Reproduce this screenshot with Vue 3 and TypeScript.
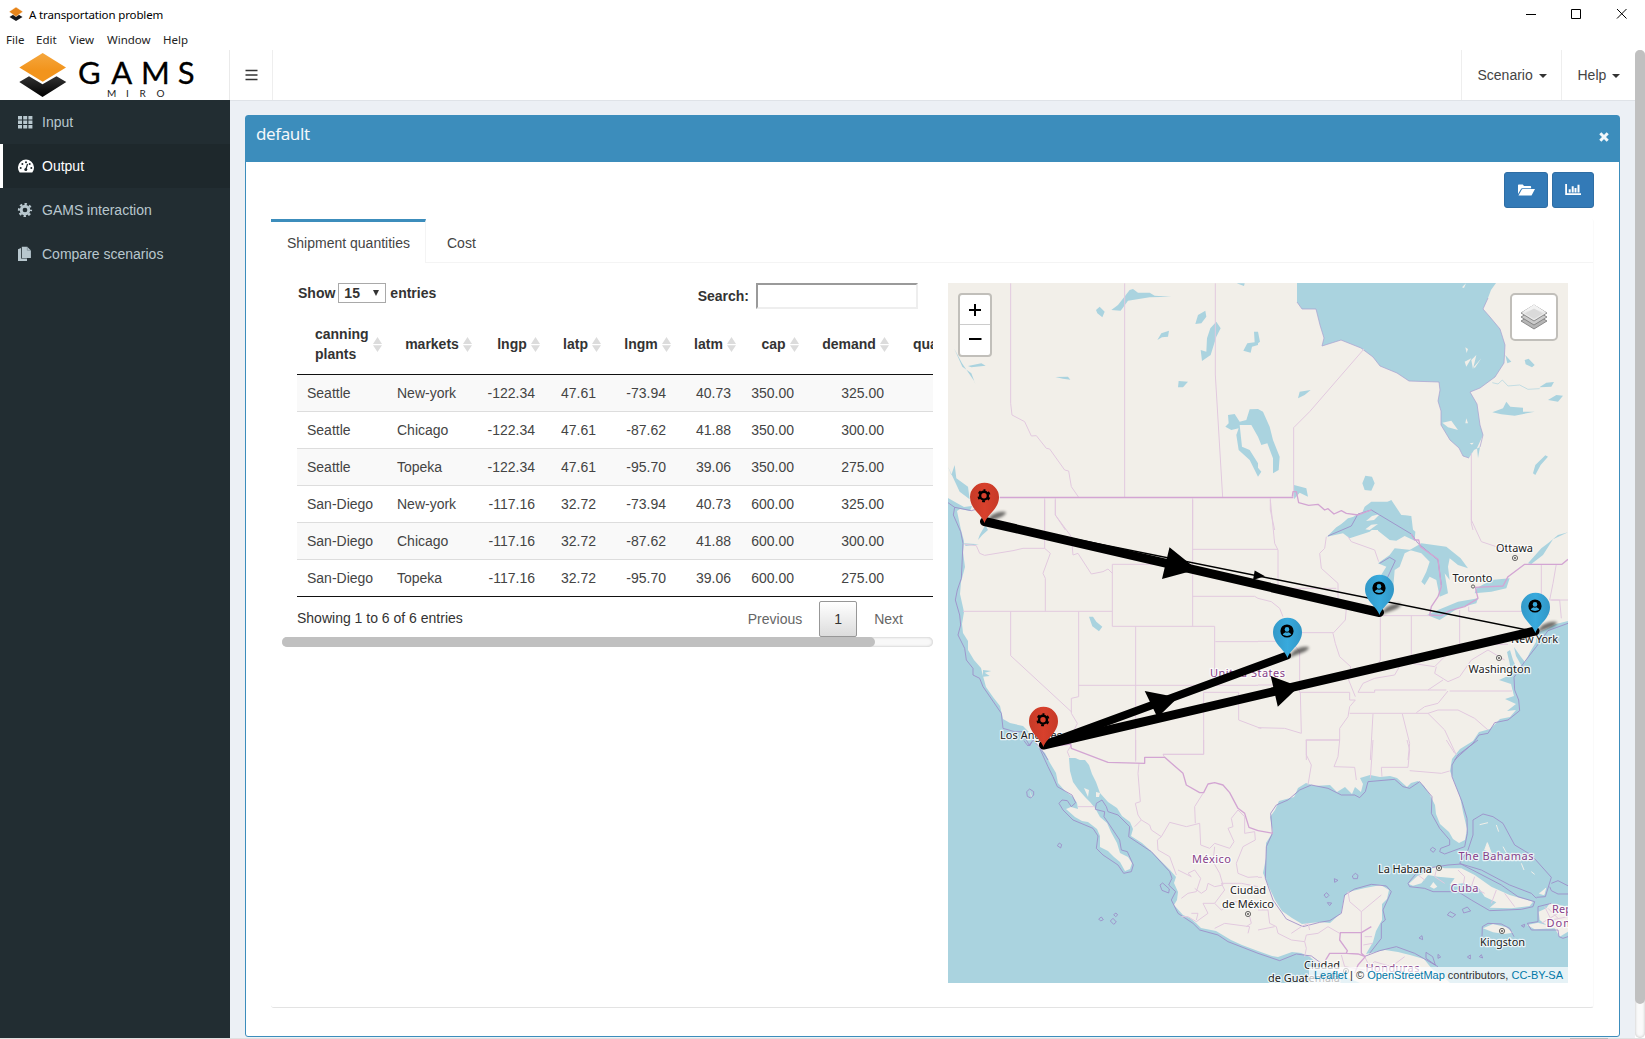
<script setup lang="ts">
interface Column { name: string; width: number }
interface Pin { x: number; y: number; kind: 'plant' | 'market' }
interface Label { text: string; x: number; y: number; w: number; country?: boolean }

const menus: string[] = ['File', 'Edit', 'View', 'Window', 'Help']

const columns: Column[] = [
  { name: 'canning plants', width: 90 },
  { name: 'markets', width: 90 },
  { name: 'lngp', width: 68 },
  { name: 'latp', width: 61 },
  { name: 'lngm', width: 70 },
  { name: 'latm', width: 65 },
  { name: 'cap', width: 63 },
  { name: 'demand', width: 90 },
  { name: 'quantities', width: 110 },
]

const rows: string[][] = [
  ['Seattle', 'New-york', '-122.34', '47.61', '-73.94', '40.73', '350.00', '325.00', ''],
  ['Seattle', 'Chicago', '-122.34', '47.61', '-87.62', '41.88', '350.00', '300.00', ''],
  ['Seattle', 'Topeka', '-122.34', '47.61', '-95.70', '39.06', '350.00', '275.00', ''],
  ['San-Diego', 'New-york', '-117.16', '32.72', '-73.94', '40.73', '600.00', '325.00', ''],
  ['San-Diego', 'Chicago', '-117.16', '32.72', '-87.62', '41.88', '600.00', '300.00', ''],
  ['San-Diego', 'Topeka', '-117.16', '32.72', '-95.70', '39.06', '600.00', '275.00', ''],
]

const pins: Pin[] = [
  { x: 984.5, y: 523, kind: 'plant' },
  { x: 1043.5, y: 747, kind: 'plant' },
  { x: 1379.5, y: 615, kind: 'market' },
  { x: 1287.5, y: 658, kind: 'market' },
  { x: 1535.5, y: 633, kind: 'market' },
]

const labels: Label[] = [
  { text: 'Ottawa', x: 1496, y: 551.5, w: 37 },
  { text: 'Toronto', x: 1452.5, y: 582, w: 40 },
  { text: 'New York', x: 1511, y: 642.5, w: 47 },
  { text: 'Washington', x: 1468.5, y: 672.5, w: 62 },
  { text: 'Los Angeles', x: 1000, y: 739, w: 62 },
  { text: 'United States', x: 1210, y: 676.5, w: 75, country: true },
  { text: 'México', x: 1192, y: 863, w: 39, country: true },
  { text: 'Ciudad', x: 1230, y: 894, w: 36 },
  { text: 'de México', x: 1222, y: 907.5, w: 52 },
  { text: 'La Habana', x: 1378, y: 872.5, w: 54 },
  { text: 'The Bahamas', x: 1458.5, y: 860, w: 75, country: true },
  { text: 'Cuba', x: 1450.5, y: 892, w: 28, country: true },
  { text: 'Rep.', x: 1552, y: 913, w: 23, country: true },
  { text: 'Domin.', x: 1546.5, y: 926.5, w: 43, country: true },
  { text: 'Kingston', x: 1480, y: 945.5, w: 45 },
  { text: 'Ciudad', x: 1304, y: 968.5, w: 36 },
  { text: 'de Guatemala', x: 1268, y: 981.5, w: 72 },
  { text: 'Honduras', x: 1365.5, y: 972, w: 54, country: true },
]

const towns: number[][] = [[1515, 558], [1499, 658], [1439, 868], [1502, 931], [1248, 914], [1346, 971]]
</script>

<template>
  <div class="app-window">
    <header class="titlebar">
      <svg class="app-icon" width="14" height="15" viewBox="0 0 14 15">
        <path d="M.5 10 7 6l6.500 4L7 14Z" fill="#17171a" />
        <path d="M0 4.700 7 0l7 4.700L7 9.700Z" fill="#e8851a" stroke="#fff" stroke-width=".5" />
      </svg>
      <span class="title">A transportation problem</span>
      <svg class="win-buttons" width="101" height="10" viewBox="0 0 101 10" fill="none" stroke="#000">
        <path d="M0 5.500h10M45.500.5h9v9h-9zM91 0l9.500 9.500M100.500 0 91 9.500" />
      </svg>
    </header>
    <nav class="menubar">
      <span v-for="m in menus" :key="m" :class="['menu', 'menu-' + m.toLowerCase()]">{{ m }}</span>
    </nav>

    <div class="body">
      <aside class="sidebar">
        <div class="logo">
          <svg width="229" height="50" viewBox="0 50 229 50">
            <defs>
              <linearGradient id="blackFace" x1="0" y1="0" x2="0" y2="1"><stop offset="0" stop-color="#333" /><stop offset="1" stop-color="#000" /></linearGradient>
              <linearGradient id="orangeFace" x1="0" y1="0" x2="0" y2="1"><stop offset="0" stop-color="#f5a73e" /><stop offset=".6" stop-color="#f2941c" /></linearGradient>
            </defs>
            <path d="M19.300 82 29 76.300l13.500 8 14-8L66.300 82 42.500 97Z" fill="url(#blackFace)" />
            <path d="M19.300 67.500 42.700 53l23.300 14.500L42.700 81.700Z" fill="url(#orangeFace)" />
            <text class="gams" y="84" x="78 111.300 141 177.800">GAMS</text>
            <text class="miro" y="97" x="107 126 139.500 156.500">MIRO</text>
          </svg>
        </div>
        <a class="item">
          <svg width="18" height="14" viewBox="0 0 18 14" fill="#b8c7ce"><path d="M1 1h4v3.500H1zM6.200 1h4v3.500h-4zM11.400 1h4v3.500h-4zM1 5.500h4V9H1zM6.200 5.500h4V9h-4zM11.400 5.500h4V9h-4zM1 10h4v3.500H1zM6.200 10h4v3.500h-4zM11.400 10h4v3.500h-4z" /></svg>
          <span>Input</span>
        </a>
        <a class="item active">
          <svg width="18" height="14" viewBox="0 0 18 14"><path d="M2.700 13.500A8 8 0 1 1 15.300 13.500Z" fill="#fff" /><g fill="#1e282c"><circle cx="3.700" cy="9" r="1" /><circle cx="5.400" cy="5" r="1" /><circle cx="9" cy="3.300" r="1" /><circle cx="14.300" cy="9" r="1" /><circle cx="12.700" cy="5" r="1" /><circle cx="8.800" cy="10.500" r="1.500" /></g><path d="m9 10 1.500-5" stroke="#1e282c" stroke-width="1.200" /></svg>
          <span>Output</span>
        </a>
        <a class="item">
          <svg width="18" height="14" viewBox="0 0 18 14"><g fill="none" stroke="#b8c7ce"><circle cx="8" cy="7" r="3.800" stroke-width="2.900" /><circle cx="8" cy="7" r="6" stroke-width="2.200" stroke-dasharray="2.400 2.312" stroke-dashoffset="1.200" /></g></svg>
          <span>GAMS interaction</span>
        </a>
        <a class="item">
          <svg width="18" height="16" viewBox="0 0 18 16"><path d="M1 3.200 4 2v10.500h6V15H1Z" fill="#b8c7ce" /><path d="M4.800.8h5.400L13.900 4.400V12H4.800Z" fill="#b8c7ce" /><path d="M10.300.8v3.500h3.600" fill="none" stroke="#6f8087" stroke-width=".6" /></svg>
          <span>Compare scenarios</span>
        </a>
      </aside>

      <main class="main">
        <div class="topnav">
          <div class="toggle"><svg width="13" height="12" viewBox="0 0 13 12"><path d="M.5 1.500h12M.5 6h12M.5 10.500h12" stroke="#333" stroke-width="1.700" /></svg></div>
          <div class="spacer"></div>
          <div class="drop scenario">Scenario <i class="caret"></i></div>
          <div class="drop help">Help <i class="caret"></i></div>
        </div>

        <section class="box">
          <div class="box-head">
            <span class="box-title">default</span>
            <svg width="10" height="10" viewBox="0 0 10 10"><path d="m1.300 1.300 7.400 7.400m0-7.400L1.300 8.700" stroke="#f2f7fa" stroke-width="3" /></svg>
          </div>
          <div class="tools">
            <button class="tool open"><svg width="17" height="12" viewBox="0 0 17 12" fill="#fff"><path d="M0 10V1.200Q0 .5.800.5h4l1.200 1.500h6.300q.8 0 .8.800v1.400H4Q3.400 4.200 3 4.900Z" /><path d="M.5 11.500 3.800 5.500Q4.100 5 4.700 5H17l-3.200 6Q13.500 11.500 13 11.500Z" /></svg></button>
            <button class="tool chart"><svg width="16" height="12" viewBox="0 0 16 12"><path d="M1.100 0v10.200H16" fill="none" stroke="#fff" stroke-width="1.800" /><path d="M4.700 8.500V5.300M7.700 8.500V2.200M10.500 8.500V4M13.500 8.500V.7" stroke="#fff" stroke-width="2" /></svg></button>
          </div>

          <div class="tabs">
            <div class="tab-head">
              <div class="tab on">Shipment quantities</div>
              <div class="tab">Cost</div>
              <div class="tab-fill"></div>
            </div>
            <div class="tab-body">
              <div class="table-col">
                <div class="controls">
                  <div class="length">Show <span class="select">15<i></i></span> entries</div>
                  <div class="search">Search: <span class="input"></span></div>
                </div>
                <table>
                  <colgroup><col v-for="c in columns" :key="c.name" :style="{ width: c.width + 'px' }"></colgroup>
                  <thead>
                    <tr>
                      <th v-for="c in columns" :key="c.name">
                        <div class="th"><span>{{ c.name }}</span><svg width="9" height="15" viewBox="0 0 9 15"><path d="M0 7 4.500 0 9 7ZM0 8.200h9L4.500 15Z" fill="#dcdcdc" /></svg></div>
                      </th>
                    </tr>
                  </thead>
                  <tbody>
                    <tr v-for="(r, i) in rows" :key="i"><td v-for="(c, j) in r" :key="j">{{ c }}</td></tr>
                  </tbody>
                </table>
                <div class="table-foot">
                  <span class="info">Showing 1 to 6 of 6 entries</span>
                  <div class="pager"><span class="prev">Previous</span><span class="page">1</span><span class="next">Next</span></div>
                </div>
                <div class="hscroll"><div></div></div>
              </div>

              <div class="map">
                <svg width="620" height="700" viewBox="948 283 620 700">
                  <defs>
                    <filter id="soft" x="-30%" y="-60%" width="160%" height="220%"><feGaussianBlur stdDeviation="1.500" /></filter>
                    <linearGradient id="red" x1="0" y1="0" x2="1" y2="0"><stop offset="0" stop-color="#c63a27" /><stop offset=".5" stop-color="#d8402c" /><stop offset="1" stop-color="#c63a27" /></linearGradient>
                    <linearGradient id="blue" x1="0" y1="0" x2="1" y2="0"><stop offset="0" stop-color="#3399c8" /><stop offset=".5" stop-color="#38aadd" /><stop offset="1" stop-color="#3196c6" /></linearGradient>
                  </defs>
                  <rect x="948" y="283" width="620" height="700" fill="#f2efe9" />

                  <!-- oceans -->
                  <g class="water">
                    <path d="M948 498 955 502 964 507 972 506 970 511 960 509 957 511 961 530 964 541 963 552 965 567 961 582 960 594 964 612 962 624 963 633 968 641 968 650 974 660 981 668 983 676 986 687 993 697 1000 706 1003 719 1010 723 1023 726 1030 733 1034 738 1038 747 1045 753 1050 763 1056 773 1058 783 1065 791 1073 797 1077 803 1078 809 1071 807 1066 809 1075 817 1082 821 1088 822 1097 829 1100 836 1100 847 1108 851 1114 857 1120 862 1125 871 1130 869 1132 863 1128 857 1120 853 1117 843 1111 832 1107 823 1100 817 1095 808 1090 802 1085 797 1078 789 1073 782 1070 771 1069 758 1075 758 1080 760 1085 760 1089 765 1092 774 1096 782 1100 793 1108 802 1117 808 1122 816 1130 822 1133 829 1131 836 1142 843 1151 851 1160 860 1170 870 1176 877 1174 883 1178 892 1177 900 1174 905 1183 915 1190 918 1196 923 1201 928 1216 931 1231 940 1242 945 1258 951 1272 956 1278 957 1292 952 1301 953 1310 957 1319 965 1334 972 1360 983H948Z" />
                    <path d="M1568 621 1556 624 1546 629 1536 633 1536 642 1530 652 1525 662 1521 657 1514 647 1516 656 1521 665 1518 671 1513 660 1510 650 1507 652 1510 665 1510 675 1499 680 1511 684 1514 696 1505 699 1516 704 1507 711 1516 710 1510 717 1500 719 1490 729 1479 732 1473 741 1460 749 1452 759 1450 771 1455 784 1460 797 1463 812 1467 829 1465 840 1459 843 1453 839 1449 832 1440 824 1436 814 1435 805 1430 795 1424 786 1418 781 1411 783 1407 787 1397 778 1390 776 1380 777 1370 775 1360 778 1363 784 1361 792 1355 787 1352 794 1345 787 1337 792 1330 785 1315 786 1306 783 1298 788 1294 797 1279 801 1275 810 1270 817 1273 832 1266 843 1266 858 1263 873 1269 887 1275 900 1282 911 1292 918 1302 924 1320 922 1330 923 1341 913 1344 897 1348 892 1365 888 1381 885 1389 890 1387 899 1382 904 1382 920 1376 931 1373 942 1366 954 1385 950 1398 952 1410 955 1424 959 1432 969 1442 975 1450 983H1568Z" />
                    <path d="M1297 283 1297 302 1302 309 1316 309 1320 325 1324 338 1322 346 1341 340 1361 348 1373 357 1380 366 1397 373 1409 381 1439 382 1440 390 1438 401 1441 411 1441 425 1450 440 1459 448 1463 456 1469 458 1474 450 1480 447 1478 458 1477 448 1483 435 1480 425 1477 404 1470 392 1480 388 1495 377 1504 363 1505 345 1500 329 1490 317 1483 309 1488 298 1491 290 1496 283Z" />
                  </g>

                  <!-- lakes of the north -->
                  <g class="water" transform="translate(948 280) scale(.33333)">
                    <path d="M490 90 510 75 545 30 555 27 570 38 605 38 620 47 670 50 605 52 540 62 518 92ZM444 90 455 80 470 95 463 112 448 100ZM322 291 360 290 367 299 345 296ZM742 132 750 105 772 92 775 110 760 130ZM628 180 640 160 663 152 660 170 642 172ZM690 322 692 303 720 305 705 322ZM777 175 787 145 805 125 818 145 805 170 788 225 762 243 758 210 775 215ZM886 212 898 190 920 187 918 155H930V195L912 200 908 218ZM832 440 842 430 840 405 860 402 875 425 895 420 905 388 930 387V470L910 435 875 435 882 500 905 510 930 550V590L905 540 872 510 865 465 872 445 850 450ZM866 10 890 10 888 18Z" />
                    <path d="M18 205 42 250 80 305 82 312 70 280 43 260ZM60 258 100 250 113 257 70 262ZM0 560 10 585 20 555 25 595 60 620 65 658 35 635Z" />
                    <path d="M120 750 112 735 95 765 90 780 103 765Z" />
                  </g>
                  <g class="water" transform="translate(1258 280) scale(.33333)">
                    <path d="M0 387 15 395 35 440 45 480 65 530 62 570 45 580 45 535 28 490 10 495 0 470ZM0 563 10 575 0 590ZM0 155 6 185 0 190ZM120 355 125 335 158 330 140 345ZM313 610 322 587 342 590 350 610 340 632 320 630ZM742 225 760 245 748 250ZM800 240 812 236 830 255 822 262 803 253ZM844 322 865 308 888 306 880 320ZM870 360 895 345 915 347 900 365ZM703 397 735 385 745 365 757 380 795 383 795 395 830 395 770 407 730 403ZM825 580 832 555 862 526 870 530 848 555 832 585ZM108 615 145 625 150 650 125 638 108 658Z" />
                    <path d="M230 750 270 715 310 705 300 720 340 725 330 690 350 685 400 660 430 705 460 708 465 750Z" />
                    <path d="M703 308 720 312 733 300 750 318 785 315 810 328 845 326" style="fill: none; stroke: #aad3df; stroke-width: 2" />
                  </g>

                  <!-- great lakes -->
                  <g class="water" transform="translate(1258 500) scale(.33333)">
                    <path d="M207 110 235 82 300 42 312 40 320 20 340 5H400L418 45 455 48 455 80 472 95 470 122 440 108 415 122 395 120 360 92 360 75 335 95 275 115 255 100Z" />
                    <path d="M360 190 395 165 410 145 460 150 440 160 425 200 410 210 405 270 370 300 352 280 360 240 385 200Z" />
                    <path d="M455 150 490 130 565 140 608 175 630 205 600 195 575 175 570 200 575 240 560 220 570 280 545 290 535 240 515 230 500 255 490 245 505 215 515 185 490 160ZM507 345 540 330 600 305 660 295 655 310 600 325 545 360ZM650 280 655 265 700 240 755 235 745 265 700 275ZM810 190 850 145 870 130 900 105 930 97 885 118 855 165 820 192Z" />
                  </g>
                  <g class="water" transform="translate(948 500) scale(.33333)">
                    <path d="m423 350 12 0 10 15 18 15-10 14-20-15ZM105 510l25 3-20 5 15 10-20 2ZM362 776l25 0-10 4ZM48 130l45 3-40 5Z" />
                  </g>

                  <!-- islands -->
                  <g class="land" transform="translate(1258 740) scale(.33333)">
                    <path d="M452 432 478 408 500 400 535 378 560 385 610 385 650 405 700 440 755 465 825 485 815 498 760 505 695 503 715 487 680 470 660 440 615 430 575 435 590 415 540 410 510 405 490 430 465 437ZM516 440l10-14 12 14-10 6Z" />
                    <path d="M675 565 705 552 745 562 765 578 740 582 705 577ZM807 555 840 548 865 555 845 540 842 515 865 505 875 490 930 500V575L905 590 890 565 830 568Z" />
                    <path d="M665 254 690 248M715 255 722 275M680 330 688 308 700 340M735 320l10 18M760 350l18 10M790 370l8 20M820 395l10 8M844 460l14 4 5-20" stroke="#f2efe9" stroke-width="3" />
                  </g>
                  <g class="land" transform="translate(1258 280) scale(.33333)">
                    <path d="M553 428 580 422 600 450 570 442ZM620 245 640 235 625 260ZM640 240 655 225 645 268ZM648 260 670 235 650 265ZM625 415 630 430 622 430ZM635 490l12-2-5 6ZM622 202l8 5-4 12ZM612 22l12-12-6 14ZM322 748 340 734 360 732 335 750Z" />
                  </g>
                  <path class="land" d="M1366 521 1372 516 1380 514 1374 520ZM1084 788l5 2-1 7ZM1096 792l4 1-1 4-3 0ZM1030 791l2 6-1 0Z" />

                  <!-- maritime limits -->
                  <g class="sea-line" transform="translate(948 500) scale(.33333)">
                    <path d="M0 8 20 22 70 32 95 25M20 22 16 45 38 95 45 130 40 235 28 270 22 300 35 345 38 375 30 405 50 445 55 480 75 505 75 525 95 535 105 560 160 640 165 685 200 695 222 695 235 720 245 738 255 720 278 745 300 780" />
                  </g>
                  <g class="sea-line" transform="translate(948 740) scale(.33333)">
                    <path d="M228 2 240 18 252 5M275 25 300 80 315 110 328 140 372 165 383 188 370 200 358 182 342 180 333 190 345 210 375 240 435 265 450 288 445 325 465 345 510 375 527 400 550 395 556 375 538 335 520 330 515 300 485 255 468 230 470 215 442 208 445 190 462 180 475 200 480 215 510 225 545 260 542 290 610 335 665 395 672 415 662 435 683 455 670 480 690 520 735 550 755 570 810 585 840 605 930 640" />
                    <path d="m236 155 9-8 12 8v10l-9 9-10-5ZM328 317l6-8 7 5-3 10ZM452 537l8-6 6 8-8 4ZM497 524l7-5 5 6-6 5ZM487 543l8-8 10 11-8 7ZM636 435l8-6 20 18-2 12-20-8Z" />
                  </g>
                  <g class="sea-line" transform="translate(1258 740) scale(.33333)">
                    <path d="M0 640 65 662 115 642 160 648 190 670M660 0 600 45 582 75 582 110 612 185 627 235 628 280 620 320 560 342 545 335 548 325 575 315 575 300 545 265 520 220 522 170 485 125 455 145 435 140 410 118 330 125 322 155 305 173 290 165 250 165 210 145 160 135 125 150 90 180 55 195 38 220 43 280 25 320 22 415 45 480 85 537 135 560 185 547 215 542 250 520 260 465 290 447 340 433 385 438 400 455 375 510 382 540 370 550 370 595 335 640M318 650 365 632 415 620 470 640 505 660 540 680" />
                    <path d="M450 430 475 400 525 382 570 375 610 372 670 390 755 435 820 460 835 475M450 430 455 440 500 445 525 455 600 455 640 480 695 512 790 508 825 500 830 485 780 470 730 435 605 370 630 330 645 285 645 240 675 222 705 230 735 250 770 315 820 345 880 412 862 470 835 472M880 430 900 422 935 440M875 440 880 452 900 462 930 462M672 590 673 560 690 550 730 552 755 565 768 590M930 590 915 595 903 590 900 570 820 570 808 550 840 545 840 500 880 490" />
                    <path d="m516 329 8-7 9 6-7 9ZM283 408l9-8 8 6-2 10h-12ZM229 416l11 5-10 6ZM198 465l8-7 7 8-8 8ZM208 488l13 1-6 8ZM568 525l8-10 17 9-10 8ZM613 508l15-7 10 12-21 6ZM483 594l9-7 2 12ZM504 655v-18l20 13 8 25ZM540 643l8 8-8 4ZM790 557l10-4-2 9ZM628 651l9-6v12ZM664 650l6-6 4 10Z" />
                  </g>
                  <g class="sea-line" transform="translate(1258 500) scale(.33333)">
                    <path d="M930 370 870 392 835 440 800 485 768 532 770 570 782 600 785 632 750 660 710 668 690 700 663 705 645 730 600 770 590 780M300 42 340 30 460 102 480 130 540 180 550 255M210 108 280 78 300 42M365 190 395 172 412 182 385 240" />
                  </g>
                  <path class="shore" d="M1297 302 1302 309 1316 309 1320 325 1324 338 1322 346 1341 340 1361 348 1373 357 1380 366 1397 373 1409 381 1439 382 1440 390 1438 401 1441 411 1441 425 1450 440 1459 448 1463 456 1469 458M1480 447 1483 435 1480 425 1477 404 1470 392 1480 388 1495 377 1504 363 1505 345 1500 329 1490 317 1483 309 1488 298" />

                  <!-- state and province lines -->
                  <g class="state" transform="translate(948 280) scale(.33333)">
                    <path d="M188 10V370L192 405 230 425 250 468 265 467 295 505 305 507 350 570 362 573 370 620 392 652M530 10V652M802 10V285L824 652M290 655V750M322 655V705L352 750M734 655V750" />
                  </g>
                  <g class="state" transform="translate(1258 280) scale(.33333)">
                    <path d="M318 207 155 395 107 443V655M640 520V730L645 750M37 655V690L50 750" />
                  </g>
                  <g class="state" transform="translate(948 500) scale(.33333)">
                    <path d="M50 133 85 137 95 160 110 166 195 152 225 145H290V0M290 145 307 160 285 220 292 235V334M322 0V45L370 110 375 165 390 160 430 222 465 215 480 207 493 220M45 334H493M493 193V379H800V555M493 193H660M734 0V379M734 148H930M734 289H920L930 295M802 425H930M188 334V467L372 637M392 334V590L370 595 370 640 388 670 360 730M392 556H930M563 379V780M767 577V763H645L650 772M767 577H872V660L930 682" />
                  </g>
                  <g class="state" transform="translate(1258 500) scale(.33333)">
                    <path d="M37 0 50 130 60 150 60 265H235M0 148H60M0 295 40 305 65 325 75 350M205 110 200 145 185 160 190 205 240 250 240 295 265 325 262 360 225 400 232 430 245 470 278 500 272 540 292 590M122 398H225M0 424H100L125 455V577M0 555H125M125 577H275V600H292L275 620 270 650 245 685 245 720H145V780M127 577 130 700 80 685 0 683M270 110 280 125 350 150 362 185M367 348V480L345 520M460 347V490M375 347H520M605 330V430M632 320V334H865L875 345M605 433H750M300 577H350V570H565M575 573H762M275 640H510M345 642 337 780M433 642 455 730 450 780M300 577 315 550 350 535 410 525 430 490 462 490 530 500 560 470 590 450 605 430M535 500 530 520 570 545 605 530 640 480 690 450 740 480M475 638 500 620 540 610 570 573M510 640 560 690 595 765M510 640 540 630H600L650 655 690 690M640 0V60L670 125 730 145M850 192V290L865 340M895 192 885 250 875 300H905L910 355M880 300H930M510 570 555 540M0 683 10 685" />
                  </g>
                  <g class="state" transform="translate(948 740) scale(.33333)">
                    <path d="M563 0V65M767 0V43H645M370 15 358 35 365 52M390 200H440M573 70 570 100 577 185 562 190 570 225 580 240 560 260M580 240 605 255 610 270 640 290 665 247 715 260 755 250 758 315 785 325 800 310 845 325M765 160 740 200 742 250M845 325 858 305 840 265 855 260 850 235 870 210 890 230 890 280 920 275 922 300 885 320 865 370 870 400 900 412 930 410M640 290 628 300 630 330 665 350 685 405M690 390 730 410 720 400 740 390 758 415 745 455 720 460 700 475M800 320 795 365 815 400 825 435 800 440 780 430 775 450 760 460 740 445M820 430 830 450 800 490 765 490 780 520 745 545 720 530 700 530M800 565 830 550 905 560 900 580M820 430 880 430 930 440M800 490 820 510 860 485 930 490M905 530 910 550 895 560M730 520 750 520 745 540" />
                  </g>
                  <g class="state" transform="translate(1258 740) scale(.33333)">
                    <path d="M145 0V45L160 75 150 135M143 0H245L240 50 228 80 290 82 295 120M345 0 337 115M447 0 455 30 450 82H370L372 110M455 92 550 100 575 93M565 0 590 40M270 455 275 485 310 515V578M310 515 370 465M0 412H12M0 510 30 510 35 550 55 560 60 580 100 600 140 605 145 625 140 650M0 570 50 560M145 585 180 580 210 560 245 580M145 585 140 605M155 570 150 550 130 560 100 580M480 405 500 420M535 390 530 410 560 430M600 390 620 410 615 440M650 410 640 440 680 460M715 450 700 490M740 460 770 500M250 645 260 680 320 690 350 665 400 680 440 650M215 680 270 700M320 650 330 670 360 690M860 500 880 540 930 530M850 550 900 520M870 505l30 30M320 590h22M316 615l28-5" />
                  </g>

                  <!-- national borders -->
                  <g class="nation" transform="translate(948 280) scale(.33333)"><path d="M155 652.500H1035" /></g>
                  <g class="nation" transform="translate(1258 280) scale(.33333)"><path d="M103 650 105 635 115 635 122 668 152 676 180 673 200 690 210 686 228 702 250 692 265 700 300 705 340 690" /></g>
                  <g class="nation" transform="translate(1258 500) scale(.33333)"><path d="M460 102 470 120H482L487 140 540 178 550 260 540 290 520 320 515 345 550 347 575 332 620 320 660 295 652 262 735 258 750 230 800 193H912L930 178" /></g>
                  <g class="nation" transform="translate(948 740) scale(.33333)"><path d="M285 22 368 12 370 25 480 67 590 70V52H650L705 100 715 135 755 158 767 158 780 132 800 128 825 135 845 158 870 205 890 220 903 262 930 272" /></g>
                  <g class="nation" transform="translate(1258 740) scale(.33333)"><path d="M0 272 45 280M310 578H247L245 600 268 632 265 640H215L200 665M310 578V640L322 650M310 578 340 560M265 640 300 642 322 650 300 675 290 700" /></g>

                  <g class="towns"><g v-for="(t, i) in towns" :key="i"><circle :cx="t[0]" :cy="t[1]" r="2.600" /><circle :cx="t[0]" :cy="t[1]" r=".7" /></g><circle cx="1473" cy="586.500" r="1.600" /></g>
                  <text v-for="(l, i) in labels" :key="i" :x="l.x" :y="l.y" :textLength="l.w" :class="['place', { country: l.country }]">{{ l.text }}</text>

                  <!-- shipment flows -->
                  <g stroke="#000" stroke-linecap="round">
                    <path d="M984.500 521 1535 631.500" stroke-width="1.500" />
                    <path d="M984.500 521.500 1379.500 612.500" stroke-width="9" />
                    <path d="M1043.500 745 1535 631" stroke-width="9" />
                    <path d="M1043.500 745 1287 655.500" stroke-width="8" />
                  </g>
                  <path d="M1169.500 547.300 1162 579 1197 569.500ZM1254.700 570.500 1253 580 1265 576.300ZM1144.700 691 1157.500 717.500 1178 697.500ZM1270.700 676 1277.800 706.700 1299 686.500Z" />

                  <g v-for="(p, i) in pins" :key="i" :transform="`translate(${p.x} ${p.y})`">
                    <path d="M0 0 7-8Q15-12.500 21-11 23-9 14-5Z" fill="#000" opacity=".55" filter="url(#soft)" />
                    <path d="M0 0C-3-9-14.500-14-14.500-26A14.500 14.300 0 0 1 14.500-26C14.500-14 3-9 0 0Z" :fill="p.kind === 'plant' ? 'url(#red)' : 'url(#blue)'" />
                    <g v-if="p.kind === 'plant'" transform="translate(-.5 -27.300) rotate(-90)" fill="none" stroke="#000"><circle r="3.900" stroke-width="2.400" /><circle r="5.600" stroke-width="1.900" stroke-dasharray="2.800 3.064" stroke-dashoffset="1.400" /></g>
                    <g v-else transform="translate(-.5 -27)"><circle r="6.600" /><circle cy="-1.600" r="2.300" fill="#37a8da" /><path d="M-4.300 3.800Q-3.800 1.800-1.300 1.300 0 2.100 1.300 1.300 3.800 1.800 4.300 3.800 0 6-4.300 3.800Z" fill="#37a8da" /></g>
                  </g>
                </svg>
                <div class="zoom"><span><svg width="14" height="14" viewBox="0 0 14 14"><path d="M1 7h12M7 1v12" stroke="#000" stroke-width="2" /></svg></span><span><svg width="14" height="14" viewBox="0 0 14 14"><path d="M1 6h12.500" stroke="#000" stroke-width="2" /></svg></span></div>
                <div class="layers">
                  <svg width="26" height="26" viewBox="0 0 26 26"><g stroke="#777" stroke-width=".8"><path d="M0 17 13 9l13 8-13 8Z" fill="#b5b5b5" /><path d="M0 13 13 5l13 8-13 8Z" fill="#cbcbcb" /><path d="M0 9 13 1l13 8-13 8Z" fill="#e9e9e9" /></g><path d="M0 9 13 .5 26 9 13 5Z" fill="#f2f2f2" /><path d="m4 9.500 9-5 9 5-9 5.500Z" fill="#dadada" /></svg>
                </div>
                <div class="attribution"><a>Leaflet</a> | © <a>OpenStreetMap</a> contributors, <a>CC-BY-SA</a></div>
              </div>
            </div>
          </div>
        </section>
      </main>
      <div class="vscroll"><div></div></div>
    </div>
    <div class="window-edge"><div></div></div>
  </div>
</template>

<style>
html, body { margin: 0; overflow: hidden; background: #fff; }
</style>

<style scoped>
* { box-sizing: border-box; }
.app-window { width: 1645px; height: 1039px; display: flex; flex-direction: column; overflow: hidden; font: 14px/20px "Liberation Sans", Arial, sans-serif; color: #333; background: #fff; }
.titlebar { height: 30px; flex: none; display: flex; align-items: center; padding: 0 17px 2px 9px; font: 12px/16px "Noto Sans", sans-serif; color: #000; }
.title { margin-left: 6px; flex: 1; font-size: 11.500px; letter-spacing: -.14px; padding-top: 1px; }
.win-buttons { margin-right: 1px; }
.menubar { height: 20px; flex: none; display: flex; font: 11.500px/20px "Noto Sans", sans-serif; color: #222; padding-left: 6px; }
.menu-file { width: 30px; }
.menu-edit { width: 33px; }
.menu-view { width: 38px; }
.menu-window { width: 56px; }
.body { flex: 1; min-height: 0; display: flex; }
.sidebar { width: 230px; flex: none; background: #222d32; }
.logo { height: 50px; background: #fff; border-right: 1px solid #eaeaea; }
.logo svg { display: block; }
.gams { font: 31px "Lato", sans-serif; fill: #000; stroke: #000; stroke-width: .3px; }
.miro { font: 10px "Lato", sans-serif; fill: #222; }
.item { height: 44px; display: flex; align-items: center; gap: 7px; padding-left: 14px; border-left: 3px solid transparent; color: #b8c7ce; }
.item.active { background: #1e282c; border-color: #fff; color: #fff; }
.main { flex: 1; min-width: 0; display: flex; flex-direction: column; background: #ecf0f5; }
.topnav { height: 51px; flex: none; display: flex; background: #fff; border-bottom: 1px solid #dfe3e8; }
.toggle { width: 43px; border-right: 1px solid #eee; display: flex; align-items: center; justify-content: center; }
.spacer { flex: 1; }
.drop { border-left: 1px solid #eee; display: flex; align-items: center; padding-left: 15.500px; color: #444; }
.scenario { width: 100px; }
.help { width: 74px; }
.caret { margin-left: 6px; border: 4px solid transparent; border-top-color: #333; border-bottom: 0; margin-top: 1px; }
.box { margin: 14px 15px 1px; flex: 1; min-height: 0; background: #fff; border: 1px solid #3c8dbc; border-radius: 3px; }
.box-head { height: 46px; background: #3c8dbc; color: #f3f7fa; display: flex; justify-content: space-between; padding: 8px 10px 0; font: 17px/22px "Noto Sans", sans-serif; }
.box-title { letter-spacing: -.4px; margin-top: -1px; }
.box-head svg { margin-top: 8px; }
.tools { display: flex; justify-content: flex-end; gap: 4px; padding: 10px 25px 0; height: 57px; }
.tool { height: 36px; padding: 0; background: #337ab7; border: 1px solid #2e6da4; border-radius: 3px; display: flex; align-items: center; justify-content: center; }
.open { width: 44px; }
.chart { width: 42px; }
.tabs { margin: 0 25px; height: 789px; border-right: 1px solid #fafafa; border-bottom: 1px solid #e3e3e3; border-radius: 3px; }
.tab-head { height: 44px; display: flex; color: #444; }
.tab { padding: 14px 16px 0 21px; border-bottom: 1px solid #f4f4f4; }
.tab.on { width: 155px; padding: 11px 0 0 16px; border-right: 1px solid #f4f4f4; border-top: 3px solid #3c8dbc; border-bottom: 0; white-space: nowrap; }
.tab-fill { flex: 1; border-bottom: 1px solid #f4f4f4; }
.tab-body { display: flex; gap: 15px; padding: 20px 0 0 11px; }
.table-col { width: 651px; overflow: hidden; }
.controls { display: flex; justify-content: space-between; height: 31px; padding: 0 15px 0 16px; font-weight: bold; }
.length { display: flex; align-items: center; height: 20px; }
.select { width: 48px; height: 20px; margin: 0 4px 0 3px; border: 1px solid #a9a9a9; padding-left: 5px; display: flex; align-items: center; gap: 13px; }
.select i { border: 3px solid transparent; border-top: 6px solid #333; border-bottom: 0; margin-top: -1px; }
.search { display: flex; line-height: 26px; }
.input { width: 162px; height: 26px; margin-left: 7px; border: 2px solid; border-color: #9a9a9a #eee #eee #9a9a9a; }
table { width: 707px; margin-left: 15px; table-layout: fixed; border-collapse: separate; border-spacing: 0; border-bottom: 1px solid #111; color: #444; }
th { height: 61px; padding: 0; border-bottom: 1px solid #111; color: #333; }
.th { height: 60px; display: flex; justify-content: center; align-items: center; position: relative; text-align: center; }
.th svg { position: absolute; right: 5px; }
th:first-child .th { text-align: left; }
th:first-child span { width: 54px; }
th:nth-child(3) .th, th:nth-child(7) .th { padding-left: 2px; }
th:last-child .th { justify-content: flex-start; padding-left: 19px; }
td { height: 37px; padding: 0 10px; text-align: right; border-bottom: 1px solid #ddd; line-height: 20px; }
td:nth-child(-n+2) { text-align: left; }
tbody tr:nth-child(odd) { background: #f9f9f9; }
tbody tr:last-child td { height: 36px; border-bottom: 0; }
.table-foot { display: flex; justify-content: space-between; padding: 4px 15px 0; height: 40px; }
.info { margin-top: 7px; }
.pager { display: flex; line-height: 36px; color: #666; }
.page { width: 38px; height: 36px; margin: 0 17px; text-align: center; border: 1px solid #979797; border-radius: 2px; color: #333; background: linear-gradient(#fff, #dcdcdc); line-height: 34px; }
.next { margin-right: 15px; }
.hscroll { height: 10px; border-radius: 5px; background: #f8f8f8; box-shadow: inset 0 0 3px #bbb; }
.hscroll div { width: 593px; height: 10px; border-radius: 5px; background: #c0c0c0; }
.map { width: 620px; height: 700px; position: relative; overflow: hidden; }
.map > svg { display: block; }
.water path { fill: #aad3df; }
.land, .land path { fill: #f2efe9; }
.sea-line path { fill: none; stroke: #9b86c6; stroke-width: 3; stroke-opacity: .8; stroke-linejoin: round; }
.shore { fill: none; stroke: #a99fd0; stroke-width: .7; }
.state path { fill: none; stroke: #e2c9df; stroke-width: 3; stroke-linejoin: round; }
.nation path { fill: none; stroke: #d3a5d3; stroke-width: 4; stroke-linejoin: round; }
.towns circle { fill: #f2efe9; stroke: #444; stroke-width: .8; }
.place { font: 11px "Noto Sans", sans-serif; fill: #222; stroke: #fff; stroke-opacity: .75; stroke-width: 2.500px; stroke-linejoin: round; paint-order: stroke; }
.place.country { fill: #873f8a; }
.zoom { position: absolute; left: 10px; top: 10px; width: 34px; height: 64px; border: 2px solid #c1bfba; border-radius: 4px; background: #fff; }
.zoom span { height: 29px; display: flex; align-items: center; justify-content: center; }
.zoom span:first-child { border-bottom: 1px solid #ccc; height: 30px; }
.layers { position: absolute; right: 10px; top: 10px; width: 48px; height: 48px; border: 2px solid #c1bfba; border-radius: 5px; background: #fff; display: flex; align-items: center; justify-content: center; }
.attribution { position: absolute; right: 0; bottom: 0; height: 16px; padding: 0 5px; background: rgba(255, 255, 255, .7); font-size: 11px; line-height: 16px; white-space: nowrap; }
.attribution a { color: #0078a8; }
.vscroll { width: 10px; flex: none; border-radius: 5px; background: #fafafa; box-shadow: inset 0 0 3px #bbb; }
.vscroll div { height: 954px; border-radius: 5px; background: #c0c0c0; }
.window-edge { height: 1px; flex: none; background: #e0e0e0; display: flex; padding-left: 1570px; }
.window-edge div { width: 38px; background: #bbb; }
</style>
